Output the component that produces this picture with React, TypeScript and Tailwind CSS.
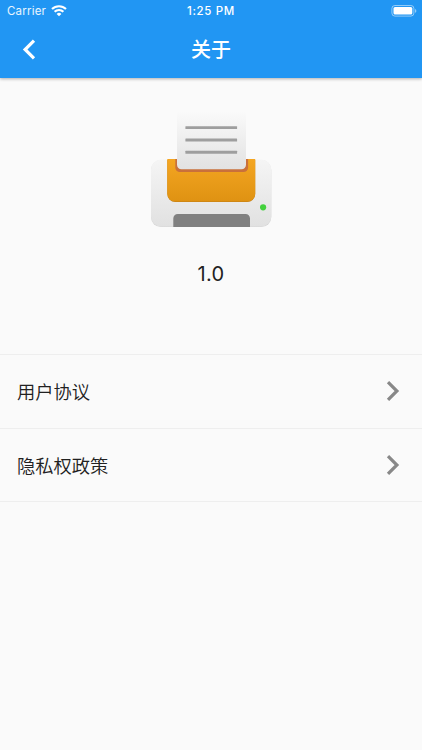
const links = ["用户协议", "隐私权政策"];

function StatusBar() {
  return (
    <div className="grid h-[22px] grid-cols-3 items-center text-[11.5px] leading-none">
      <div className="flex items-center gap-[5px] pl-[7px]">
        <span className="pt-[2px] tracking-[0.2px] text-white/90">Carrier</span>
        <svg width="16" height="12" viewBox="0 0 16 12" fill="none" stroke="white" strokeWidth="2.1">
          <path d="M1 4.1a10 10 0 0 1 14 0" />
          <path d="M3.6 6.8a6.2 6.2 0 0 1 8.8 0" />
          <path d="M5.6 8.9a3.4 3.4 0 0 1 4.8 0L8 11.3z" fill="white" stroke="none" />
        </svg>
      </div>
      <span className="pt-[2px] text-center font-medium tracking-[0.65px]">1:25 PM</span>
      <div className="flex justify-end pr-[5px]">
        <svg width="26" height="12" viewBox="0 0 26 12" fill="none">
          <rect x="0.9" y="0.5" width="22" height="10.6" rx="3" stroke="white" strokeOpacity="0.5" />
          <rect x="2.5" y="2.1" width="18.8" height="7.4" rx="1.5" fill="white" />
          <path d="M24 4a2 2 0 0 1 0 3.8z" fill="white" fillOpacity="0.5" />
        </svg>
      </div>
    </div>
  );
}

function PrinterLogo() {
  return (
    <svg width="122" height="122" viewBox="150 108 122 122" className="block">
      <defs>
        <linearGradient id="body" x1="0" y1="0" x2="0" y2="1">
          <stop offset="0" stopColor="#f5f5f5" />
          <stop offset="1" stopColor="#e1e1e1" />
        </linearGradient>
        <linearGradient id="tray" x1="0" y1="0" x2="0" y2="1">
          <stop offset="0" stopColor="#f4a622" />
          <stop offset="1" stopColor="#df9212" />
        </linearGradient>
        <linearGradient id="paper" x1="0" y1="0" x2="0" y2="1">
          <stop offset="0" stopColor="#fafafa" />
          <stop offset="1" stopColor="#e2e2e2" />
        </linearGradient>
        <clipPath id="trayClip">
          <path d="M167.3 159H255.2V193.5a8 8 0 0 1-8 8H175.3a8 8 0 0 1-8-8z" />
        </clipPath>
        <filter id="soft" x="-10%" y="-10%" width="120%" height="120%">
          <feGaussianBlur stdDeviation="0.6" />
        </filter>
      </defs>
      <rect x="151" y="160" width="120.3" height="67.1" rx="10" fill="#d6d6d6" />
      <rect x="151" y="159.5" width="120.3" height="67" rx="10" fill="url(#body)" />
      <path d="M167.3 160H255.2V194a8 8 0 0 1-8 8H175.3a8 8 0 0 1-8-8z" fill="#bf7c16" />
      <g clipPath="url(#trayClip)">
        <rect x="167" y="159" width="89" height="43" fill="url(#tray)" />
        <rect x="175.3" y="145" width="72.8" height="27" rx="4.5" fill="#c9703b" filter="url(#soft)" />
      </g>
      <rect x="177" y="111" width="69" height="58.2" rx="4.5" fill="url(#paper)" />
      <g fill="#9e9e9e">
        <rect x="185.4" y="126.2" width="51.7" height="2.9" rx="0.5" />
        <rect x="185.4" y="138.5" width="51.7" height="2.9" rx="0.5" />
        <rect x="185.4" y="150.8" width="51.7" height="2.9" rx="0.5" />
      </g>
      <path d="M173.3 227V218.4a4.4 4.4 0 0 1 4.4-4.4H245.6a4.4 4.4 0 0 1 4.4 4.4V227z" fill="#808080" />
      <circle cx="263.1" cy="207.3" r="3.1" fill="#43d13d" />
    </svg>
  );
}

export default function App() {
  return (
    <div className="flex h-[750px] w-[422px] flex-col bg-[#fafafa] font-['Inter','Noto_Sans_CJK_SC',sans-serif] text-[#212121]">
      <header className="h-[77.5px] bg-[#2196f3] text-white shadow-[0_1px_3px_rgba(0,0,0,0.3)]">
        <StatusBar />
        <div className="grid h-[55px] grid-cols-3 items-center">
          <svg width="14" height="22" viewBox="0 0 14 22" fill="none" stroke="white" strokeWidth="3.2" className="ml-[22px]">
            <path d="M12 1.6 3.1 10.5 12 19.4" />
          </svg>
          <h1 className="text-center text-[20px] font-medium leading-none">关于</h1>
        </div>
      </header>

      <section className="flex h-[276.5px] flex-col items-center pt-[30.5px]">
        <PrinterLogo />
        <p className="mt-[31px] text-[20px] leading-[26px] tracking-[0.3px]">1.0</p>
      </section>

      <ul className="border-t border-[#eeeeee]">
        {links.map((label) => (
          <li key={label} className="flex h-[73.5px] items-center justify-between border-b border-[#eeeeee] pl-[17px] pr-[22px]">
            <span className="pt-[2px] text-[18.3px] font-[350] leading-none">{label}</span>
            <svg width="14" height="22" viewBox="0 0 14 22" fill="none" stroke="#888888" strokeWidth="3.2">
              <path d="m2 2.1 8.9 8.9L2 19.9" />
            </svg>
          </li>
        ))}
      </ul>
    </div>
  );
}
